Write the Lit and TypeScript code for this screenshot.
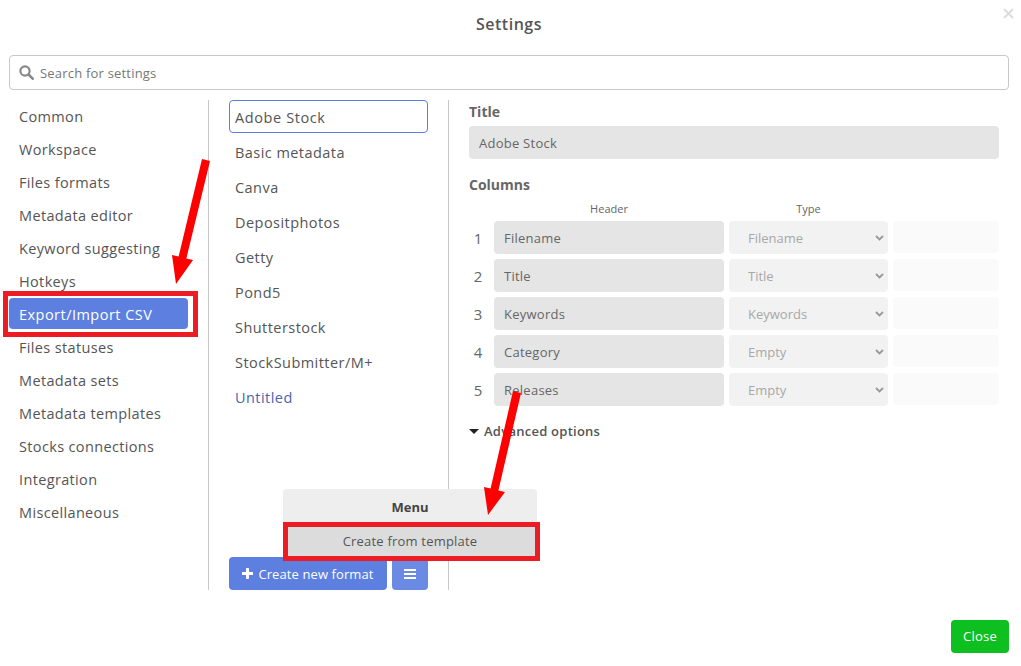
// app.ts
// Settings dialog with the Export/Import CSV section open

import { LitElement, html, css, svg } from "lit";
import { customElement } from "lit/decorators.js";

const SECTIONS = [
  "Common",
  "Workspace",
  "Files formats",
  "Metadata editor",
  "Keyword suggesting",
  "Hotkeys",
  "Export/Import CSV",
  "Files statuses",
  "Metadata sets",
  "Metadata templates",
  "Stocks connections",
  "Integration",
  "Miscellaneous",
];

const FORMATS = [
  "Adobe Stock",
  "Basic metadata",
  "Canva",
  "Depositphotos",
  "Getty",
  "Pond5",
  "Shutterstock",
  "StockSubmitter/M+",
  "Untitled",
];

const COLUMNS = [
  { header: "Filename", type: "Filename" },
  { header: "Title", type: "Title" },
  { header: "Keywords", type: "Keywords" },
  { header: "Category", type: "Empty" },
  { header: "Releases", type: "Empty" },
];

@customElement("app-root")
export class AppRoot extends LitElement {
  static styles = css`
    :host {
      display: block;
      position: relative;
      width: 1021px;
      height: 666px;
      overflow: hidden;
      background: #fff;
      color: #555;
      font-family: "Open Sans", "Liberation Sans", sans-serif;
      font-size: 14px;
    }

    * {
      box-sizing: border-box;
    }

    .title {
      height: 55px;
      padding: 13px 3px 0 0;
      text-align: center;
      font-size: 16px;
      font-weight: 600;
      letter-spacing: 0.5px;
      line-height: 22px;
      color: #555;
    }

    .dismiss {
      position: absolute;
      top: 8px;
      left: 1003px;
      width: 11px;
      height: 11px;
    }

    .search {
      display: flex;
      align-items: center;
      gap: 6px;
      height: 35px;
      margin: 0 12px 0 9px;
      padding-left: 9px;
      border: 1px solid #c8c8c8;
      border-radius: 4px;
      color: #777;
      font-size: 13px;
      letter-spacing: 0.2px;
    }

    .body {
      display: flex;
      height: 490px;
      margin-top: 10px;
    }

    .sidebar {
      display: flex;
      flex-direction: column;
      gap: 2px;
      width: 209px;
      padding: 0 20px 0 9px;
      border-right: 1px solid #c8c8c8;
    }

    .sidebar div {
      height: 31px;
      padding: 0 10px;
      border-radius: 4px;
      font-size: 14.5px;
      letter-spacing: 0.35px;
      line-height: 33px;
      white-space: nowrap;
    }

    .sidebar .active {
      background: #5c7fe0;
      color: #fff;
      letter-spacing: 0.47px;
    }

    .formats {
      display: flex;
      flex-direction: column;
      width: 240px;
      padding: 0 20px;
      border-right: 1px solid #c8c8c8;
    }

    .format-list {
      flex: 1;
    }

    .format-list div {
      height: 33px;
      margin-bottom: 2px;
      padding: 0 5px;
      border: 1px solid transparent;
      border-radius: 4px;
      font-size: 14.5px;
      letter-spacing: 0.45px;
      line-height: 33px;
    }

    .format-list .selected {
      border-color: #5c7fe0;
      letter-spacing: 0.6px;
    }

    .format-list .unsaved {
      color: #4b65ad;
    }

    .actions {
      display: flex;
      gap: 5px;
    }

    .btn {
      display: flex;
      align-items: center;
      justify-content: center;
      gap: 5px;
      height: 33px;
      border-radius: 4px;
      background: #5c7fe0;
      color: #fff;
      font-size: 13px;
      letter-spacing: 0.1px;
    }

    .btn.create {
      width: 158px;
    }

    .btn.more {
      width: 36px;
      background: #6a8ae4;
    }

    .detail {
      flex: 1;
      padding: 1px 22px 0 20px;
    }

    .label {
      font-weight: 700;
      line-height: 22px;
      color: #666;
    }

    input,
    select {
      display: block;
      width: 100%;
      height: 33px;
      border: 0;
      border-radius: 4px;
      outline: 0;
      font: inherit;
      font-size: 13px;
      letter-spacing: 0.25px;
      background: #e5e5e5;
      color: #666;
      padding: 0 10px;
    }

    .name {
      margin-top: 3px;
      margin-bottom: 15px;
    }

    .col-head,
    .row {
      display: grid;
      column-gap: 5px;
      grid-template-columns: 20px 230px 159px 106px;
    }

    .col-head {
      margin-top: 5px;
      height: 16px;
      font-size: 11px;
      line-height: 16px;
      text-align: center;
      color: #666;
    }

    .rows {
      display: flex;
      flex-direction: column;
      gap: 5px;
      margin-top: 4px;
    }

    .row {
      height: 33px;
    }

    .num {
      padding-right: 2px;
      line-height: 34px;
      font-size: 15px;
      text-align: center;
      color: #666;
    }

    .pick {
      position: relative;
    }

    .pick select {
      appearance: none;
      padding-left: 19px;
      background: #f2f2f2;
      color: #a8a8a8;
      letter-spacing: 0;
      opacity: 1;
    }

    .pick svg {
      position: absolute;
      top: 14px;
      right: 4px;
      width: 9px;
      height: 6px;
    }

    .extra {
      height: 32px;
      border-radius: 4px;
      background: #fafafa;
    }

    .advanced {
      display: flex;
      align-items: center;
      gap: 5px;
      margin-top: 15px;
      font-size: 13px;
      font-weight: 600;
      letter-spacing: 0.25px;
      line-height: 20px;
    }

    .advanced i {
      width: 0;
      height: 0;
      border: 5px solid transparent;
      border-top-color: #222;
      border-bottom: 0;
    }

    .footer {
      display: flex;
      justify-content: flex-end;
      padding: 30px 12px 0 0;
    }

    .close {
      width: 58px;
      height: 33px;
      border-radius: 4px;
      background: #0dbf1f;
      color: #fff;
      font-size: 13px;
      letter-spacing: 0.2px;
      line-height: 33px;
      text-align: center;
    }

    .menu {
      position: absolute;
      left: 283px;
      top: 489px;
      width: 254px;
      border-radius: 4px 4px 0 0;
      background: #eee;
      font-size: 13px;
      text-align: center;
    }

    .menu b {
      display: block;
      height: 33px;
      font-weight: 700;
      line-height: 36px;
      color: #444;
    }

    .menu div {
      height: 38px;
      background: #dcdcdc;
      letter-spacing: 0.2px;
      line-height: 38px;
    }

    .callout {
      position: absolute;
      border: 5px solid #ed1c24;
    }

    .callout.section {
      left: 3px;
      top: 291px;
      width: 195px;
      height: 46px;
    }

    .callout.entry {
      left: 283px;
      top: 522px;
      width: 257px;
      height: 39px;
    }

    .arrows {
      position: absolute;
      inset: 0;
      width: 1021px;
      height: 666px;
      pointer-events: none;
    }
  `;

  render() {
    return html`
      <div class="title">Settings</div>
      <svg class="dismiss" viewBox="0 0 11 11">
        <path d="M1 1l9 9M10 1l-9 9" stroke="#ddd" stroke-width="2" fill="none" />
      </svg>
      <div class="search">
        <svg width="15" height="15" viewBox="0 0 15 15">
          <circle cx="6" cy="6" r="4.6" stroke="#888" stroke-width="2.2" fill="none" />
          <path d="M9.5 9.5l4.2 4.2" stroke="#888" stroke-width="2.6" stroke-linecap="round" />
        </svg>
        Search for settings
      </div>
      <div class="body">
        <div class="sidebar">
          ${SECTIONS.map(
            (s) => html`<div class=${s === "Export/Import CSV" ? "active" : ""}>${s}</div>`
          )}
        </div>
        <div class="formats">
          <div class="format-list">
            ${FORMATS.map(
              (f) => html`<div
                class=${f === "Adobe Stock" ? "selected" : f === "Untitled" ? "unsaved" : ""}
              >
                ${f}
              </div>`
            )}
          </div>
          <div class="actions">
            <div class="btn create">
              <svg width="11" height="11" viewBox="0 0 11 11">
                <path d="M5.5 1v9M1 5.5h9" stroke="#fff" stroke-width="3" stroke-linecap="round" />
              </svg>
              Create new format
            </div>
            <div class="btn more">
              <svg width="12" height="10" viewBox="0 0 12 10">
                <path d="M0 1h12M0 5h12M0 9h12" stroke="#fff" stroke-width="2" />
              </svg>
            </div>
          </div>
        </div>
        <div class="detail">
          <div class="label">Title</div>
          <input class="name" readonly value="Adobe Stock" />
          <div class="label">Columns</div>
          <div class="col-head"><span></span><span>Header</span><span>Type</span><span></span></div>
          <div class="rows">
            ${COLUMNS.map(
              (c, i) => html`<div class="row">
                <div class="num">${i + 1}</div>
                <input readonly value=${c.header} />
                <div class="pick">
                  <select disabled><option>${c.type}</option></select>
                  <svg viewBox="0 0 9 6">
                    <path d="M1 1l3.5 3.5L8 1" stroke="#999" stroke-width="1.8" fill="none" />
                  </svg>
                </div>
                <div class="extra"></div>
              </div>`
            )}
          </div>
          <div class="advanced"><i></i>Advanced options</div>
        </div>
      </div>
      <div class="footer"><div class="close">Close</div></div>
      <div class="menu">
        <b>Menu</b>
        <div>Create from template</div>
      </div>
      <div class="callout section"></div>
      <div class="callout entry"></div>
      <svg class="arrows" viewBox="0 0 1021 666">
        ${svg`<path d="M202 159L210 161L186.4 258.4L193 260L176 284L172 255L178.6 256.6Z" fill="#f00" />`}
        ${svg`<path d="M513 391L521 393L498.4 490.4L505 492L488 515L484 487L490.6 488.6Z" fill="#f00" />`}
      </svg>
    `;
  }
}
